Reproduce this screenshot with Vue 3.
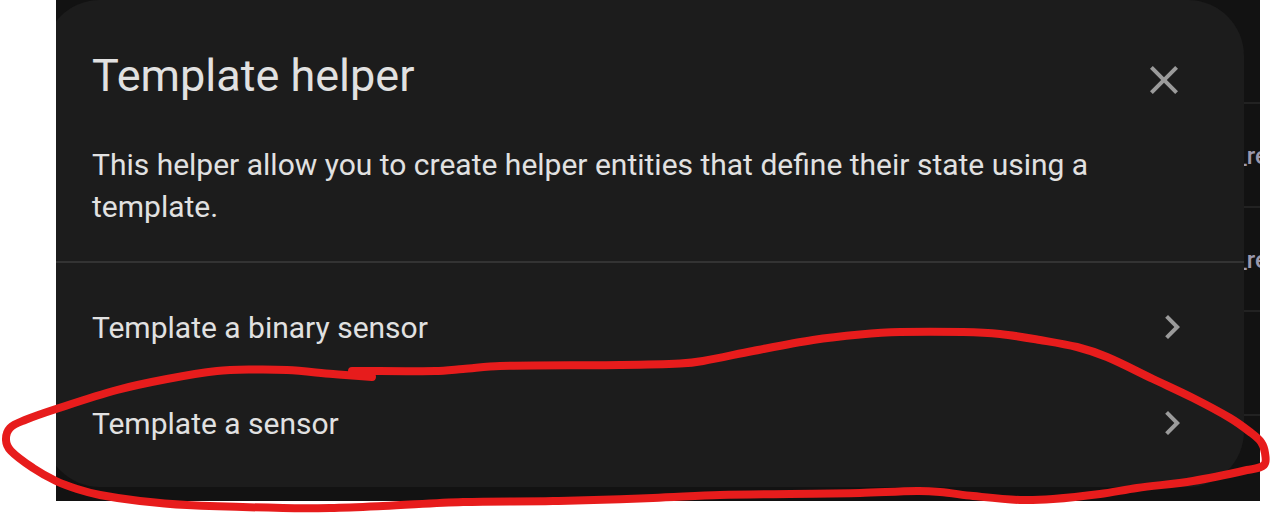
<script setup>
const options = ['Template a binary sensor', 'Template a sensor']
const entities = ['', '_re', '_re', '', '']

const strokePoints = [
  [372, 377], [333, 374], [287, 370], [252, 369.5], [217, 371], [167, 379], [117, 390], [56, 409],
  [25, 420], [10, 428], [6, 440], [11, 451], [33, 468], [56, 481], [77, 489], [100, 495],
  [140, 501], [187, 505], [283, 508], [330, 508], [383, 506], [463, 502], [553, 501], [653, 498],
  [720, 495], [790, 494], [860, 493], [917, 491], [940, 492], [973, 496], [1020, 500], [1053, 499],
  [1100, 494], [1137, 488], [1193, 481], [1247, 470], [1264, 465], [1265, 453], [1261, 442],
  [1250, 432], [1230, 418], [1193, 398], [1153, 379], [1107, 357], [1077, 347], [1040, 340],
  [1000, 334], [963, 332], [900, 332], [860, 334.5], [813, 340], [753, 351], [703, 361], [680, 363.5],
  [620, 365], [500, 366], [463, 369], [435, 371], [352, 371],
]

// Catmull-Rom spline through the points, written as cubic Béziers
function smooth(points) {
  let d = `M${points[0].join(' ')}`
  for (let i = 0; i < points.length - 1; i++) {
    const b = points[i]
    const c = points[i + 1]
    const a = points[i - 1] ?? b
    const e = points[i + 2] ?? c
    const length = Math.hypot(c[0] - b[0], c[1] - b[1])
    const from = [c[0] - a[0], c[1] - a[1]]
    const to = [e[0] - b[0], e[1] - b[1]]
    const k1 = length / 3 / Math.hypot(...from)
    const k2 = length / 3 / Math.hypot(...to)
    d += `C${b[0] + from[0] * k1} ${b[1] + from[1] * k1} ${c[0] - to[0] * k2} ${c[1] - to[1] * k2} ${c.join(' ')}`
  }
  return d
}
const strokePath = smooth(strokePoints)
</script>

<template>
  <main class="page">
    <div class="screen">
      <ul class="backdrop" aria-hidden="true">
        <li v-for="(name, i) in entities" :key="i" class="entity"><span class="entity-name">{{ name }}</span></li>
      </ul>
      <section class="dialog" role="dialog" aria-labelledby="dialog-title">
        <header class="header">
          <h1 id="dialog-title" class="title">Template helper</h1>
          <button class="close" type="button" aria-label="Close">
            <svg class="icon" viewBox="0 0 24 24"><path d="M19,6.41L17.59,5L12,10.59L6.41,5L5,6.41L10.59,12L5,17.59L6.41,19L12,13.41L17.59,19L19,17.59L13.41,12L19,6.41Z" /></svg>
          </button>
        </header>
        <p class="description">This helper allow you to create helper entities that define their state using a template.</p>
        <nav class="menu">
          <button v-for="option in options" :key="option" class="option" type="button">
            <span>{{ option }}</span>
            <svg class="icon" viewBox="0 0 24 24" aria-hidden="true"><path d="M8.59,16.58L13.17,12L8.59,7.41L10,6L16,12L10,18L8.59,16.58Z" /></svg>
          </button>
        </nav>
      </section>
    </div>
    <svg class="marker" viewBox="0 0 1272 514" preserveAspectRatio="none" aria-hidden="true">
      <path :d="strokePath" />
    </svg>
  </main>
</template>

<style>
body {
  margin: 0;
  background: #fff;
}
</style>

<style scoped>
.page {
  position: relative;
  padding: 0 12px 13px 56px;
  font-family: Roboto, "Liberation Sans", sans-serif;
  color: #e1e1e1;
}
.screen {
  position: relative;
  overflow: hidden;
  padding: 0 16px 14px 0;
  background: #121212;
}
.backdrop {
  position: absolute;
  inset: 0 0 auto auto;
  width: 24px;
  margin: 0;
  padding: 0;
  list-style: none;
}
.entity {
  display: flex;
  align-items: center;
  box-sizing: border-box;
  height: 104px;
  padding-top: 2px;
  border-bottom: 2px solid #222;
  font-size: 24px;
  font-weight: 500;
  color: #9a98ac;
}
.entity:last-child {
  border-bottom: 0;
}
.dialog {
  position: relative;
  margin-left: -12px;
  padding-bottom: 16px;
  border-radius: 56px;
  background: #1c1c1c;
}
.header {
  display: flex;
  align-items: flex-start;
  justify-content: space-between;
  padding: 48px 48px 0;
}
.title {
  margin: 0;
  font-size: 45px;
  font-weight: 400;
  line-height: 56px;
}
.close {
  display: flex;
  padding: 8px;
  border: 0;
  background: none;
  cursor: pointer;
}
.icon {
  flex: none;
  width: 48px;
  height: 48px;
  fill: #9b9b9b;
}
.description {
  margin: 0;
  padding: 32px 72px 33px 48px;
  border-bottom: 2px solid #333;
  font-size: 30px;
  line-height: 42px;
}
.menu {
  padding-top: 16px;
}
.option {
  display: flex;
  align-items: center;
  justify-content: space-between;
  width: 100%;
  height: 96px;
  padding: 0 48px;
  border: 0;
  background: none;
  color: inherit;
  font: inherit;
  font-size: 30px;
  text-align: left;
  cursor: pointer;
}
.marker {
  position: absolute;
  inset: 0;
  width: 100%;
  height: 100%;
  pointer-events: none;
}
.marker path {
  fill: none;
  stroke: #e71c1c;
  stroke-width: 8;
  stroke-linecap: round;
  stroke-linejoin: round;
}
</style>
